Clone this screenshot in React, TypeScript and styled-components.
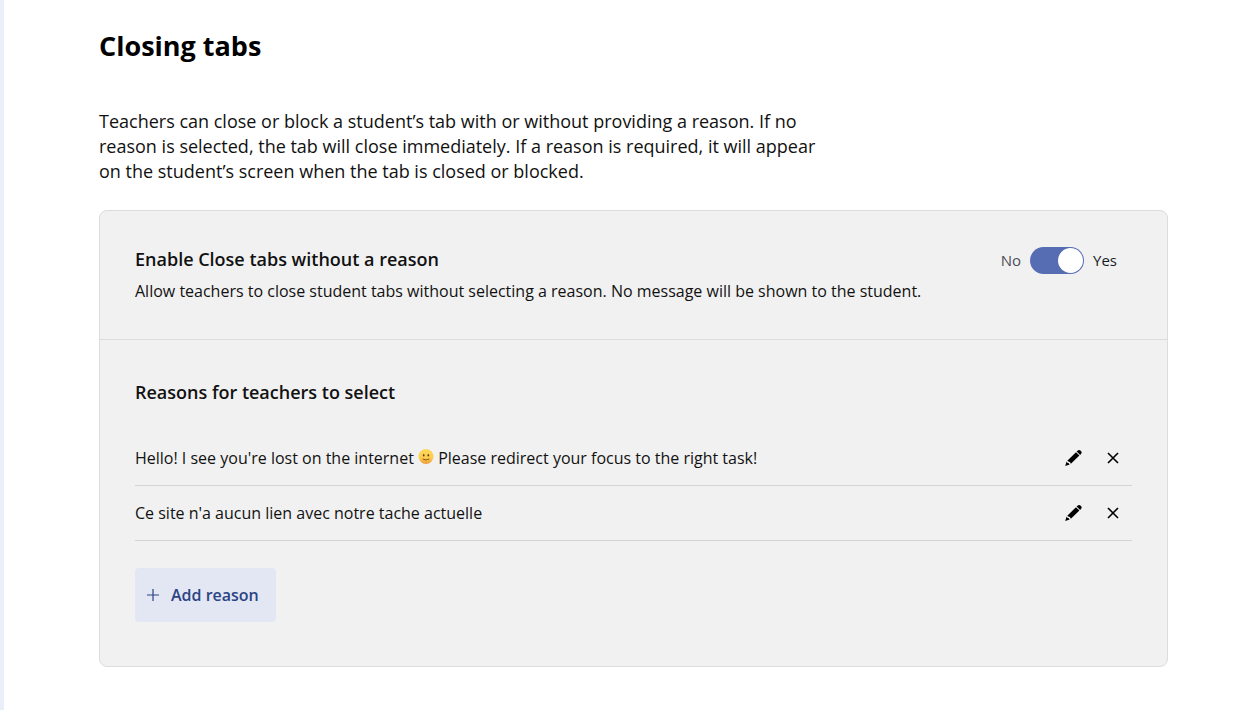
import React, { useState } from "react";
import styled, { createGlobalStyle } from "styled-components";

const GlobalStyle = createGlobalStyle`
  *, *::before, *::after { box-sizing: border-box; }
  body {
    margin: 0;
    background: #fff;
    color: #111;
    font-family: "Open Sans", "Noto Sans", sans-serif;
  }
  h1, h2, p, ul { margin: 0; padding: 0; }
  button, input { font: inherit; margin: 0; }
`;

const Page = styled.main`
  min-height: 100vh;
  border-left: 4px solid #e9eef9;
  padding: 28px 86px 43px 95px;
`;

const Title = styled.h1`
  font-size: 27px;
  font-weight: 700;
  line-height: 36px;
  color: #000;
`;

const Intro = styled.p`
  max-width: 730px;
  margin-top: 45px;
  font-size: 18px;
  line-height: 25px;
`;

const Card = styled.div`
  margin-top: 26px;
  background: #f1f1f1;
  border: 1px solid #dcdcdc;
  border-radius: 8px;
`;

const Section = styled.section`
  padding: 36px 35px;
  & + & {
    border-top: 1px solid #dcdcdc;
    padding: 40px 35px 44px;
  }
`;

const SettingRow = styled.div`
  display: flex;
  justify-content: space-between;
  align-items: flex-start;
  gap: 24px;
`;

const Heading = styled.h2`
  font-size: 18px;
  font-weight: 600;
  line-height: 24px;
`;

const Description = styled.p`
  margin-top: 8px;
  font-size: 16px;
  line-height: 24px;
`;

const ToggleGroup = styled.label`
  display: flex;
  align-items: center;
  gap: 9px;
  padding-right: 15px;
  cursor: pointer;
`;

const ToggleText = styled.span<{ $active: boolean }>`
  font-size: 15px;
  line-height: 27px;
  color: ${(p) => (p.$active ? "#1b1b26" : "#4d4d59")};
`;

const Switch = styled.input<{ checked: boolean }>`
  appearance: none;
  display: flex;
  align-items: center;
  justify-content: ${(p) => (p.checked ? "flex-end" : "flex-start")};
  width: 54px;
  height: 27px;
  padding: 1px;
  border-radius: 14px;
  background: ${(p) => (p.checked ? "#566db3" : "#9a9aa5")};
  cursor: pointer;
  &::before {
    content: "";
    width: 25px;
    height: 25px;
    border-radius: 50%;
    background: #fff;
  }
`;

const ReasonList = styled.ul`
  list-style: none;
  margin-top: 27px;
`;

const ReasonItem = styled.li`
  display: flex;
  align-items: center;
  justify-content: space-between;
  height: 55px;
  border-bottom: 1px solid #d4d4d4;
  font-size: 16px;
  line-height: 24px;
`;

const Actions = styled.div`
  display: flex;
  gap: 2px;
`;

const IconButton = styled.button`
  display: flex;
  align-items: center;
  justify-content: center;
  width: 38px;
  height: 38px;
  padding: 0;
  border: 0;
  background: none;
  color: #000;
  cursor: pointer;
`;

const AddButton = styled.button`
  display: inline-flex;
  align-items: center;
  gap: 12px;
  height: 54px;
  margin-top: 27px;
  padding: 0 17px 0 12px;
  border: 0;
  border-radius: 4px;
  background: #e2e7f3;
  color: #2c4385;
  font-size: 16px;
  font-weight: 600;
  cursor: pointer;
`;

const Emoji = styled.svg`
  width: 16px;
  height: 16px;
  vertical-align: -1px;
`;

const PencilIcon = () => (
  <svg width="18" height="18" viewBox="0 0 18 18" aria-hidden="true">
    <path
      fill="currentColor"
      d="M12.7 2.5 13.5 1.7a2.3 2.3 0 0 1 3.2 0l.2.2a2.3 2.3 0 0 1 0 3.2l-.8.8zM12 3.2 15.4 6.6 6.9 14.7 5.9 13.1 4.9 12.7 3.3 11.7zM2.6 12.6 3.4 13.8 4.8 14.2 5.7 15.5 1.2 17z"
    />
  </svg>
);

const CrossIcon = () => (
  <svg width="12" height="12" viewBox="0 0 12 12" aria-hidden="true">
    <path d="M1 1l10 10M11 1L1 11" stroke="currentColor" strokeWidth="1.6" />
  </svg>
);

const PlusIcon = () => (
  <svg width="12" height="12" viewBox="0 0 12 12" aria-hidden="true">
    <path d="M6 0v12M0 6h12" stroke="currentColor" strokeWidth="1.2" />
  </svg>
);

const SmileIcon = () => (
  <Emoji viewBox="0 0 16 16" role="img" aria-label="slightly smiling face">
    <defs>
      <linearGradient id="smile-skin" x1="0" y1="0" x2="0" y2="1">
        <stop offset="0" stopColor="#fdd85c" />
        <stop offset="0.6" stopColor="#fccb50" />
        <stop offset="1" stopColor="#ee9a38" />
      </linearGradient>
    </defs>
    <circle cx="8" cy="7.5" r="7.5" fill="url(#smile-skin)" />
    <ellipse cx="5.7" cy="6.3" rx="0.8" ry="1.2" fill="#6b430f" />
    <ellipse cx="10.3" cy="6.3" rx="0.8" ry="1.2" fill="#6b430f" />
    <path
      d="M5 10.2q3 1.6 6 0"
      fill="none"
      stroke="#80500f"
      strokeWidth="0.9"
      strokeLinecap="round"
    />
  </Emoji>
);

const reasons = [
  {
    id: "redirect",
    label: "redirect your focus",
    text: (
      <>
        Hello! I see you're lost on the internet <SmileIcon /> Please redirect
        your focus to the right task!
      </>
    ),
  },
  {
    id: "site",
    label: "ce site",
    text: <>Ce site n'a aucun lien avec notre tache actuelle</>,
  },
];

export default function App() {
  const [enabled, setEnabled] = useState(true);

  return (
    <>
      <GlobalStyle />
      <Page>
        <Title>Closing tabs</Title>
        <Intro>
          Teachers can close or block a student’s tab with or without providing
          a reason. If no reason is selected, the tab will close immediately. If
          a reason is required, it will appear on the student’s screen when the
          tab is closed or blocked.
        </Intro>
        <Card>
          <Section>
            <SettingRow>
              <div>
                <Heading id="close-heading">
                  Enable Close tabs without a reason
                </Heading>
                <Description>
                  Allow teachers to close student tabs without selecting a
                  reason. No message will be shown to the student.
                </Description>
              </div>
              <ToggleGroup>
                <ToggleText $active={!enabled}>No</ToggleText>
                <Switch
                  type="checkbox"
                  role="switch"
                  aria-labelledby="close-heading"
                  checked={enabled}
                  onChange={(e) => setEnabled(e.target.checked)}
                />
                <ToggleText $active={enabled}>Yes</ToggleText>
              </ToggleGroup>
            </SettingRow>
          </Section>
          <Section>
            <Heading>Reasons for teachers to select</Heading>
            <ReasonList>
              {reasons.map((reason) => (
                <ReasonItem key={reason.id}>
                  <span>{reason.text}</span>
                  <Actions>
                    <IconButton
                      type="button"
                      aria-label={`Edit reason: ${reason.label}`}
                    >
                      <PencilIcon />
                    </IconButton>
                    <IconButton
                      type="button"
                      aria-label={`Remove reason: ${reason.label}`}
                    >
                      <CrossIcon />
                    </IconButton>
                  </Actions>
                </ReasonItem>
              ))}
            </ReasonList>
            <AddButton type="button">
              <PlusIcon />
              Add reason
            </AddButton>
          </Section>
        </Card>
      </Page>
    </>
  );
}
